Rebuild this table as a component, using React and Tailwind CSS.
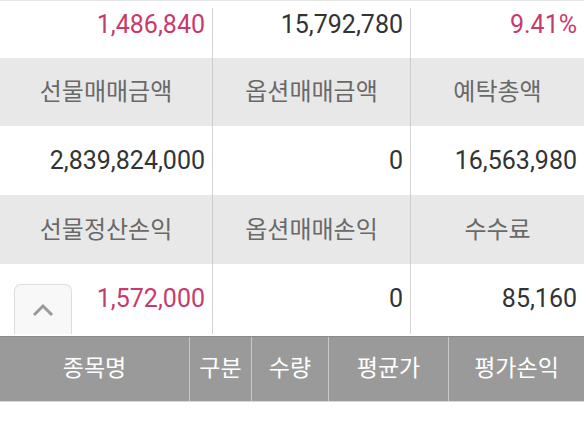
import React from "react";

const PINK = "text-[#c93a6c]";

const rows = [
  { type: "value", h: "h-[58px]", top: true, cells: [["1,486,840", PINK], ["15,792,780", "text-[#333]"], ["9.41%", PINK]] },
  { type: "label", h: "h-[68px]", cells: ["선물매매금액", "옵션매매금액", "예탁총액"] },
  { type: "value", h: "h-[69px]", cells: [["2,839,824,000", "text-[#333]"], ["0", "text-[#333]"], ["16,563,980", "text-[#333]"]] },
  { type: "label", h: "h-[69px]", cells: ["선물정산손익", "옵션매매손익", "수수료"] },
  { type: "value", h: "h-[70px]", cells: [["1,572,000", PINK], ["0", "text-[#333]"], ["85,160", "text-[#333]"]] },
];

const widths = ["w-[212px]", "w-[198px]", "flex-1"];

const headers = [
  { label: "종목명", w: "w-[189px]" },
  { label: "구분", w: "w-[62px]" },
  { label: "수량", w: "w-[77px]" },
  { label: "평균가", w: "w-[120px]" },
  { label: "평가손익", w: "flex-1" },
];

const SummaryRow = ({ row }) => {
  if (row.type === "label") {
    return (
      <div className={`flex ${row.h} bg-[#e8e8e8]`}>
        {row.cells.map((c, i) => (
          <div
            key={i}
            className={`${widths[i]} flex items-center justify-center text-[24px] text-[#696969] ${i > 0 ? "border-l border-[#cdcdcd]" : ""}`}
          >
            {c}
          </div>
        ))}
      </div>
    );
  }
  return (
    <div className={`flex ${row.h} bg-white ${row.top ? "border-t border-[#e6e6e6]" : ""}`}>
      {row.cells.map(([v, color], i) => (
        <div
          key={i}
          className={`${widths[i]} flex items-center justify-end pr-[7px] text-[25px] ${color} ${row.top ? "pb-[10px]" : ""} ${i > 0 ? (row.top ? "border-l border-[#d4d4d4] mt-[7px]" : "border-l border-[#d4d4d4]") : ""} ${row.top && i > 0 ? "pb-[17px]" : ""}`}
        >
          {v}
        </div>
      ))}
    </div>
  );
};

export default function App() {
  return (
    <div className="w-[584px] h-[430px] bg-white overflow-hidden font-['Roboto','Noto_Sans_CJK_KR',sans-serif]">
      <div className="relative">
        {rows.map((r, i) => (
          <SummaryRow key={i} row={r} />
        ))}
        <button
          type="button"
          className="absolute left-[14px] bottom-0 w-[58px] h-[50px] rounded-t-[7px] border border-b-0 border-[#dddddd] bg-[#f8f8f8] flex items-center justify-center"
          aria-label="위로"
        >
          <svg width="22" height="14" viewBox="0 0 22 14" fill="none">
            <path d="M2 12 L11 3 L20 12" stroke="#9a9a9a" strokeWidth="3" />
          </svg>
        </button>
      </div>
      <div className="mt-[2px] flex h-[66px] bg-[#9a9a9a] border-t border-[#8c8c8c] border-b border-b-[#d8d8d8]">
        {headers.map((h, i) => (
          <div
            key={i}
            className={`${h.w} flex items-center justify-center text-[23px] text-white ${i > 0 ? "border-l border-[#c8c8c8]" : ""}`}
          >
            {h.label}
          </div>
        ))}
      </div>
    </div>
  );
}
